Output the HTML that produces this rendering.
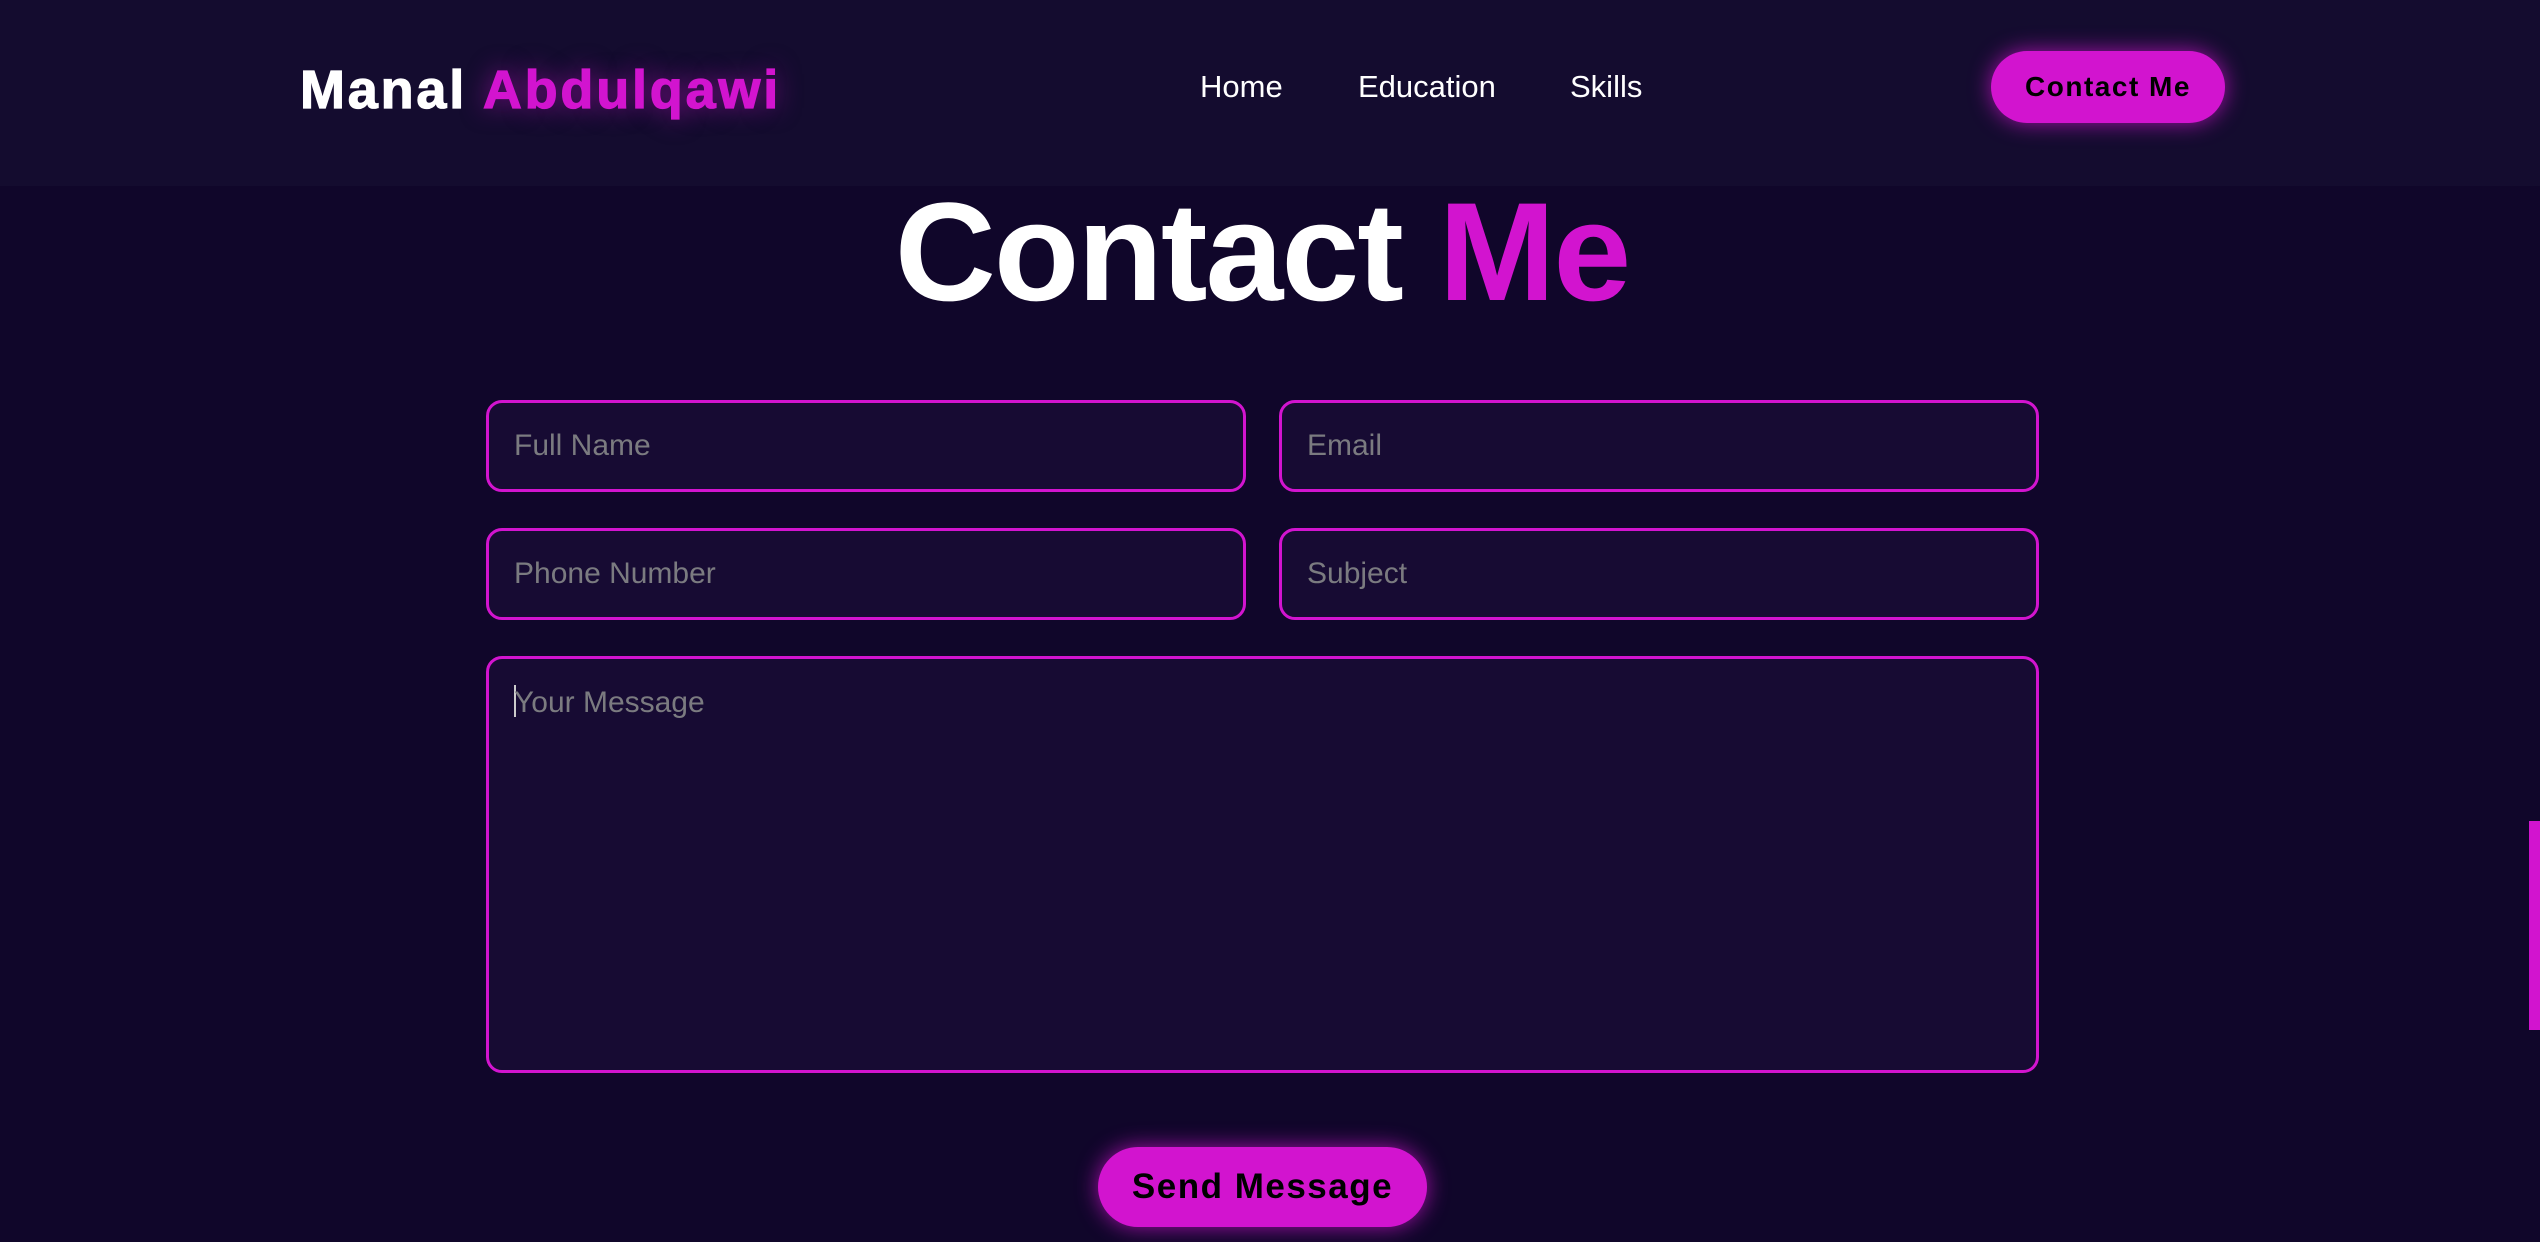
<!DOCTYPE html>
<html><head><meta charset="utf-8"><style>
*{margin:0;padding:0;box-sizing:border-box}
html,body{width:2540px;height:1242px;overflow:hidden;background:#10062a;font-family:"Liberation Sans",Arial,sans-serif}
.hdr{position:absolute;left:0;top:0;width:2540px;height:186px;background:#140c2f}
.logo{position:absolute;left:300px;top:58px;font-size:54px;font-weight:bold;color:#fff;white-space:nowrap;line-height:64px;letter-spacing:2.8px;-webkit-text-stroke:1.2px currentColor}
.logo span{color:#d214cf;text-shadow:0 0 25px rgba(210,20,207,.6)}
.nav{position:absolute;top:68px;font-size:31px;color:#fff;line-height:38px}
.btn{position:absolute;background:#d214cf;border-radius:50px;color:#000;font-weight:bold;text-align:center;box-shadow:0 0 22px rgba(210,20,207,.75);letter-spacing:1.5px}
.title{position:absolute;left:0;width:2524px;top:172px;text-align:center;font-size:140px;font-weight:bold;color:#fff;line-height:160px;letter-spacing:-2px}
.title span{color:#d214cf}
.inp{position:absolute;border:3px solid #d214cf;border-radius:16px;background:#170b33;color:#7b7b80;font-size:30px;padding-left:25px}
.cur{display:inline-block;width:2px;height:32px;background:#ccc;vertical-align:-5px;margin-right:-2px}
.sb{position:absolute;left:2529px;top:821px;width:11px;height:209px;background:#d214cf}
</style></head><body>
<div class="hdr"></div>
<div class="logo">Manal <span>Abdulqawi</span></div>
<div class="nav" style="left:1200px">Home</div>
<div class="nav" style="left:1358px">Education</div>
<div class="nav" style="left:1570px">Skills</div>
<div class="btn" style="left:1991px;top:51px;width:234px;height:72px;line-height:72px;font-size:28px">Contact Me</div>
<div class="title">Contact <span>Me</span></div>
<div class="inp" style="left:486px;top:400px;width:760px;height:92px;line-height:86px">Full Name</div>
<div class="inp" style="left:1279px;top:400px;width:760px;height:92px;line-height:86px">Email</div>
<div class="inp" style="left:486px;top:528px;width:760px;height:92px;line-height:86px">Phone Number</div>
<div class="inp" style="left:1279px;top:528px;width:760px;height:92px;line-height:86px">Subject</div>
<div class="inp" style="left:486px;top:656px;width:1553px;height:417px;padding-top:26px;line-height:36px"><span class="cur"></span>Your Message</div>
<div class="btn" style="left:1098px;top:1147px;width:329px;height:80px;line-height:80px;font-size:35px">Send Message</div>
<div class="sb"></div>
</body></html>
